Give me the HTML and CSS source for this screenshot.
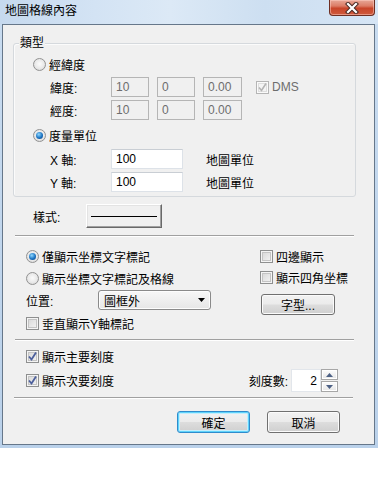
FILE: index.html
```html
<!DOCTYPE html>
<html>
<head>
<meta charset="utf-8">
<title>地圖格線內容</title>
<link rel="stylesheet" href="styles.css">
</head>
<body>
<div class="window">
  <div class="titlebar">
    <span class="title">地圖格線內容</span>
    <div class="close">
      <svg width="16" height="12" viewBox="0 0 16 12"><path d="M4 2 L12 10 M12 2 L4 10" stroke="#4a2a24" stroke-width="4.2" stroke-linecap="square" fill="none"/><path d="M4 2 L12 10 M12 2 L4 10" stroke="#ffffff" stroke-width="2.2" stroke-linecap="square" fill="none"/></svg>
    </div>
  </div>
  <div class="client">
    <div class="group">
      <span class="legend">類型</span>
      <div class="row g-radio"><span class="radio"></span><span>經緯度</span></div>
      <div class="row g-field first"><span class="lbl">緯度:</span><span class="input dis w38">10</span><span class="input dis w38">0</span><span class="input dis w39">0.00</span><span class="check dis on"><svg width="11" height="11" viewBox="0 0 11 11"><path d="M2 5.5 L4.5 8.5 L9 1.5" fill="none" stroke="#b4b4b4" stroke-width="1.6"/></svg></span><span class="dms">DMS</span></div>
      <div class="row g-field"><span class="lbl">經度:</span><span class="input dis w38">10</span><span class="input dis w38">0</span><span class="input dis w39">0.00</span></div>
      <div class="row g-radio2"><span class="radio on"></span><span>度量單位</span></div>
      <div class="row g-field x"><span class="lbl">X 軸:</span><span class="input w72">100</span><span class="unit">地圖單位</span></div>
      <div class="row g-field"><span class="lbl">Y 軸:</span><span class="input w72">100</span><span class="unit">地圖單位</span></div>
    </div>

    <div class="row style-row"><span class="style-lbl">樣式:</span><span class="stylebtn"><span class="line"></span></span></div>

    <div class="sep s1"></div>

    <div class="sec2">
      <div class="col-left">
        <div class="row"><span class="radio on"></span><span>僅顯示坐標文字標記</span></div>
        <div class="row gap2"><span class="radio"></span><span>顯示坐標文字標記及格線</span></div>
        <div class="row gap2"><span class="pos-lbl">位置:</span><span class="select"><span>圖框外</span><svg width="7" height="4" viewBox="0 0 7 4"><path d="M0 0 H7 L3.5 4 Z" fill="#000"/></svg></span></div>
        <div class="row gap3"><span class="check"></span><span>垂直顯示Y軸標記</span></div>
      </div>
      <div class="col-right">
        <div class="row"><span class="check"></span><span>四邊顯示</span></div>
        <div class="row gap1"><span class="check"></span><span>顯示四角坐標</span></div>
        <div class="btn font-btn">字型...</div>
      </div>
    </div>

    <div class="sep s2"></div>

    <div class="sec3">
      <div class="row"><span class="check on"><svg width="11" height="11" viewBox="0 0 11 11"><path d="M2 5.5 L4.5 8.5 L9 1.5" fill="none" stroke="#4c5f9c" stroke-width="1.8"/></svg></span><span>顯示主要刻度</span></div>
      <div class="row tall"><span class="check on"><svg width="11" height="11" viewBox="0 0 11 11"><path d="M2 5.5 L4.5 8.5 L9 1.5" fill="none" stroke="#4c5f9c" stroke-width="1.8"/></svg></span><span>顯示次要刻度</span>
        <span class="spacer"></span>
        <span class="tick-lbl">刻度數:</span>
        <span class="spin">
          <span class="sinput">2</span>
          <span class="sbtns">
            <span class="sbtn"><svg width="7" height="4" viewBox="0 0 7 4"><path d="M0 4 H7 L3.5 0 Z" fill="#4d6185"/></svg></span>
            <span class="sbtn"><svg width="7" height="4" viewBox="0 0 7 4"><path d="M0 0 H7 L3.5 4 Z" fill="#4d6185"/></svg></span>
          </span>
        </span>
      </div>
    </div>

    <div class="sep s3"></div>

    <div class="actions">
      <div class="btn default">確定</div>
      <div class="btn">取消</div>
    </div>
  </div>
</div>
</body>
</html>
```
FILE: styles.css
```css
* { box-sizing: border-box; }
html, body { margin: 0; padding: 0; background: #fff; }
body {
  font-family: "Liberation Sans", "Noto Sans CJK TC", sans-serif;
  font-size: 12px;
  color: #000;
}
.window {
  width: 378px;
  height: 448px;
  background: linear-gradient(to bottom, #c9dcf0 0, #bad1ea 100%);
  display: flex;
  flex-direction: column;
}
.titlebar {
  height: 24px;
  display: flex;
  align-items: flex-start;
  background: linear-gradient(90deg, #c6d9ee 0, #d3e3f4 25%, #dce9f6 45%, #cddff1 70%, #d6e5f5 100%);
  flex: none;
}
.title {
  padding: 4px 0 0 5px;
  line-height: 14px;
}
.close {
  margin-left: auto;
  margin-right: 3px;
  width: 46px;
  height: 16px;
  border: 1px solid #6e2e22;
  border-top: none;
  border-radius: 0 0 4px 4px;
  background: linear-gradient(to bottom, #e7a797 0, #dc7c66 40%, #c8452a 55%, #cf5a3d 100%);
  box-shadow: inset 0 0 0 1px rgba(255, 210, 200, 0.5);
  display: flex;
  align-items: center;
  justify-content: center;
}
.client {
  margin-left: 2px;
  width: 373px;
  height: 421px;
  border: 1px solid #66778a;
  background: #f0f0f0;
  flex: none;
}
.row {
  display: flex;
  align-items: center;
  height: 20px;
  white-space: nowrap;
}
.group {
  position: relative;
  margin: 18px 0 0 10px;
  width: 343px;
  height: 154px;
  border: 1px solid #d5d9dd;
  border-radius: 3px;
  box-shadow: inset 1px 1px 0 #fbfbfb;
}
.legend {
  position: absolute;
  top: -8px;
  left: 5px;
  padding: 0 1px;
  line-height: 14px;
  background: #f0f0f0;
}
.g-radio { margin-top: 10px; padding-left: 19px; }
.g-radio2 { margin-top: 5px; padding-left: 19px; }
.g-field { margin-top: 3px; padding-left: 36px; }
.g-field.x { margin-top: 4px; }
.lbl { width: 61px; }
.input {
  height: 20px;
  display: flex;
  align-items: center;
  padding: 0 4px;
  background: #fff;
  border: 1px solid #dde2e8;
  border-top-color: #c9ced4;
  margin-right: 8px;
}
.input.dis {
  background: #f0f0f0;
  border: 1px solid #b5b5b5;
  color: #6d6d6d;
}
.w38 { width: 38px; }
.w39 { width: 39px; margin-right: 0; }
.w72 { width: 72px; margin-right: 0; }
.unit { margin-left: 23px; }
.g-field .check { margin-left: 14px; }
.dms { color: #6d6d6d; }

.radio {
  position: relative;
  flex: none;
  width: 13px;
  height: 13px;
  margin-right: 3px;
  border-radius: 50%;
  border: 1px solid #929292;
  background: radial-gradient(circle at 50% 45%, #fbfbfb 0, #e9e9e9 55%, #cdcdcd 100%);
}
.radio.on::after {
  content: "";
  position: absolute;
  left: 2px;
  top: 2px;
  width: 7px;
  height: 7px;
  border-radius: 50%;
  background: radial-gradient(circle at 40% 35%, #8fd8ff 0, #1b73c2 55%, #0b3d78 100%);
}
.check {
  flex: none;
  width: 13px;
  height: 13px;
  margin-right: 3px;
  border: 1px solid #8e8f8f;
  background: linear-gradient(135deg, #d4d4d4 0, #f7f7f7 100%);
  box-shadow: inset 0 0 0 1px #f4f4f4, inset 0 0 0 2px #c4c4c4;
  display: flex;
  align-items: center;
  justify-content: center;
}
.check svg { display: block; }
.check.dis {
  border-color: #b5b5b5;
  background: #f4f4f4;
  box-shadow: inset 0 0 0 1px #fafafa, inset 0 0 0 2px #dedede;
}

.style-row { margin-top: 7px; height: 24px; padding-left: 30px; }
.style-lbl { width: 53px; }
.stylebtn {
  width: 76px;
  height: 24px;
  display: flex;
  align-items: center;
  justify-content: center;
  background: #f0f0f0;
  border: 1px solid;
  border-color: #ffffff #696969 #696969 #ffffff;
  box-shadow: inset -1px -1px 0 #a0a0a0, inset 1px 1px 0 #e3e3e3;
}
.stylebtn .line { width: 66px; height: 1px; background: #000; }

.sep {
  height: 2px;
  width: 339px;
  border-top: 1px solid #a0a0a0;
  border-bottom: 1px solid #ffffff;
}
.s1 { margin: 7px 0 0 12px; }
.s2 { margin: 6px 0 0 12px; }
.s3 { margin: 5px 0 0 11px; }

.sec2 {
  display: flex;
  height: 96px;
  padding-top: 9px;
}
.col-left { margin-left: 23px; width: 234px; }
.col-right { width: 110px; }
.gap1 { margin-top: 1px; }
.gap2 { margin-top: 2px; }
.gap3 { margin-top: 3px; }
.pos-lbl { width: 72px; }
.select {
  width: 113px;
  height: 20px;
  display: flex;
  align-items: center;
  justify-content: space-between;
  padding: 0 5px 0 5px;
  border: 1px solid #8a8a8a;
  border-radius: 3px;
  background: linear-gradient(to bottom, #f7f7f7 0, #efefef 50%, #e6e6e6 100%);
  box-shadow: inset 0 0 0 1px #fdfdfd;
}
.btn {
  display: flex;
  align-items: center;
  justify-content: center;
  border: 1px solid #707070;
  border-radius: 3px;
  background: linear-gradient(to bottom, #f2f2f2 0, #ebebeb 48%, #dddddd 52%, #cfcfcf 100%);
  box-shadow: inset 0 0 0 1px #fbfbfb;
}
.font-btn { width: 74px; height: 21px; margin: 7px 0 0 1px; }

.sec3 { padding: 5px 36px 0 23px; }
.sec3 .tall { margin-top: 3px; height: 23px; }
.spacer { flex: 1; }
.tick-lbl { margin-right: 3px; }
.spin { display: flex; height: 23px; }
.sinput {
  width: 30px;
  height: 23px;
  background: #fff;
  border: 1px solid #e2e6eb;
  display: flex;
  align-items: center;
  justify-content: flex-end;
  padding-right: 3px;
}
.sbtns {
  width: 17px;
  display: flex;
  flex-direction: column;
  gap: 1px;
}
.sbtn {
  height: 11px;
  border: 1px solid #a7a7a7;
  background: linear-gradient(to bottom, #fdfdfd 0, #e6e6e6 100%);
  box-shadow: inset 0 0 0 1px #ffffff;
  display: flex;
  align-items: center;
  justify-content: center;
}
.actions {
  display: flex;
  justify-content: flex-end;
  gap: 17px;
  margin-top: 12px;
  padding-right: 34px;
}
.actions .btn { width: 73px; height: 22px; }
.btn.default {
  border-color: #2f8ccc;
  box-shadow: inset 0 0 0 1px #5fd3fb, inset 0 0 0 2px #c4eefc;
}
```
